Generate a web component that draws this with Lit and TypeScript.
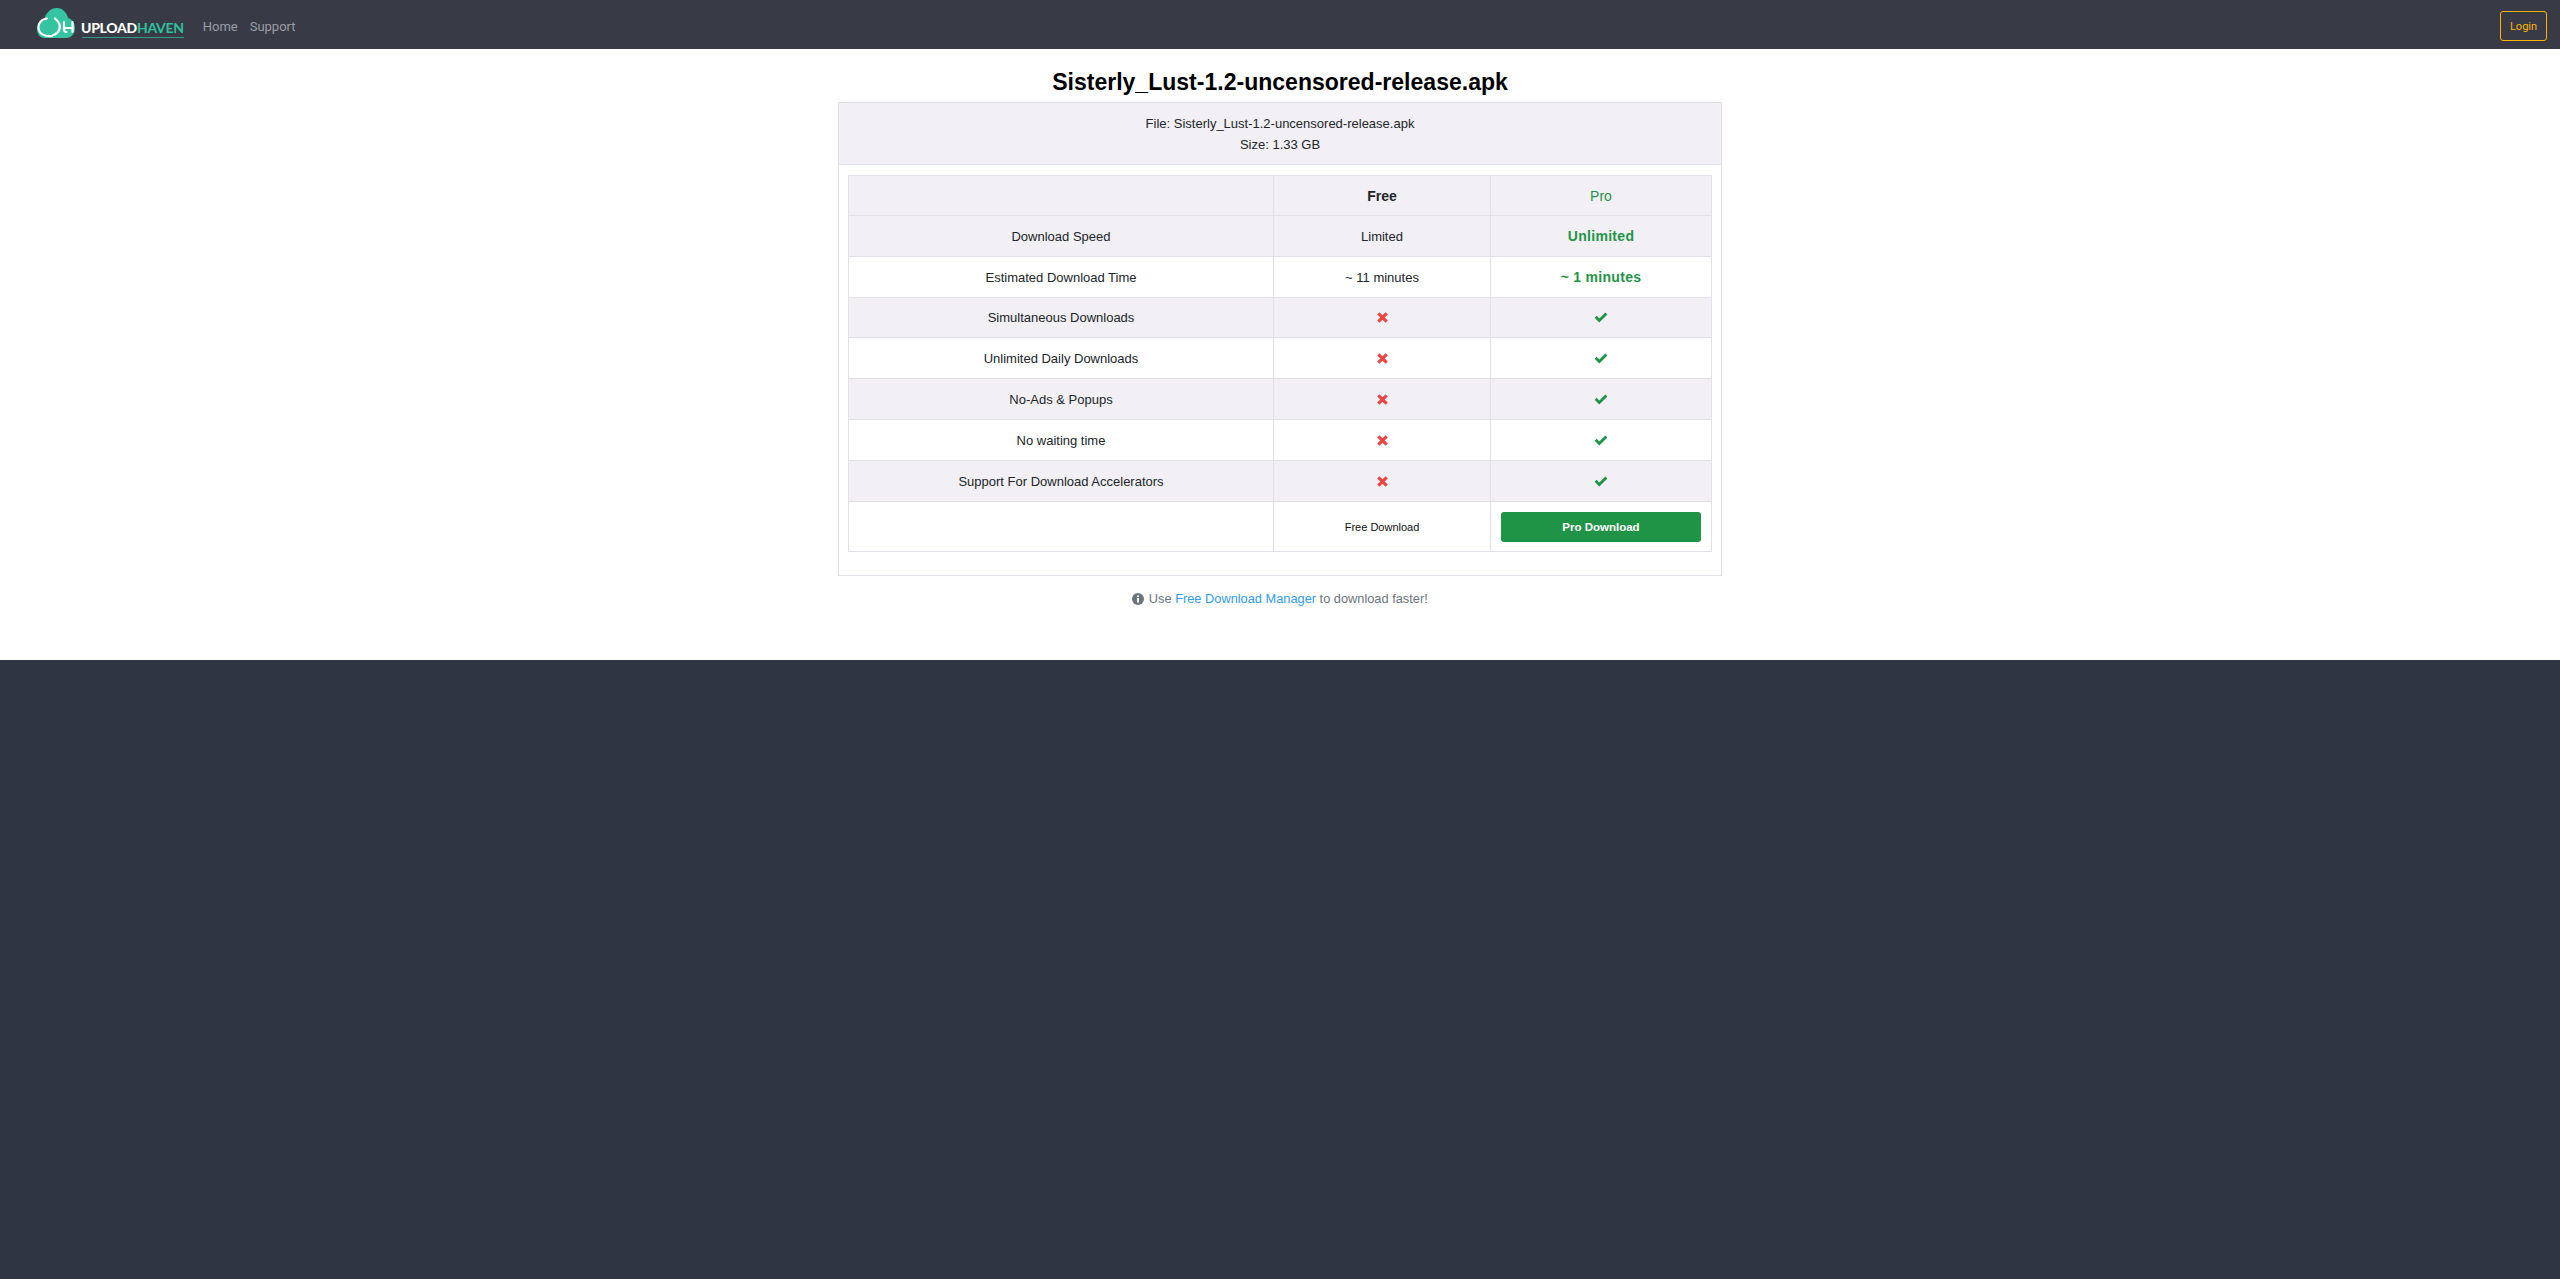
import { LitElement, html, css } from "lit";
import { customElement } from "lit/decorators.js";

const cross = html`<svg class="ic" width="13" height="13" viewBox="0 0 13 13"><path fill="#ef4444" d="M1.2 3.4 3.4 1.2 6.500 4.300 9.600 1.200 11.800 3.400 8.700 6.500 11.800 9.600 9.600 11.800 6.500 8.700 3.400 11.800 1.200 9.600 4.300 6.500Z"/></svg>`;
const check = html`<svg class="ic" width="14" height="13" viewBox="0 0 14 13"><path fill="#1f9447" d="M.6 6.800 2.600 4.800 5.300 7.500 11.400 1.400 13.400 3.400 5.300 11.500Z"/></svg>`;
const rows = ["Simultaneous Downloads", "Unlimited Daily Downloads", "No-Ads & Popups", "No waiting time", "Support For Download Accelerators"];

@customElement("app-root")
export class AppRoot extends LitElement {
  static styles = css`
    :host { display: flex; flex-direction: column; min-height: 1279px; background: #2f3542; font-family: "Liberation Sans", Arial, sans-serif; font-size: 13px; color: #212529; }
    .nav { height: 49px; box-sizing: border-box; background: #383b45; display: flex; align-items: center; padding: 3px 13px 0 37px; }
    .logo { display: flex; align-items: flex-start; align-self: flex-start; margin-top: 5px; }
    .brand { margin-left: 6px; display: flex; flex-direction: column; padding-top: 11px; }
    .word { font-family: Lato, "Open Sans", sans-serif; font-weight: 900; font-size: 14px; letter-spacing: -0.3px; line-height: 17px; color: #fff; }
    .word span { color: #2fc29f; font-weight: 700; }
    .rule { height: 1px; background: #2f9c85; margin-top: 1px; margin-left: 1px; }
    .links { display: flex; gap: 12px; margin-left: 19px; font-family: Roboto, sans-serif; font-size: 13px; color: #9a9da5; }
    .login { margin-left: auto; width: 47px; height: 30px; box-sizing: border-box; border: 1px solid #ffb300; border-radius: 3px; color: #ffb300; font-family: Roboto, sans-serif; font-size: 11px; display: flex; align-items: center; justify-content: center; }
    .main { background: #fff; height: 611px; display: flex; flex-direction: column; align-items: center; }
    h1 { margin: 19px 0 0; height: 34px; font-size: 23.04px; line-height: 29px; font-weight: 700; color: #000; }
    .card { width: 884px; height: 474px; box-sizing: border-box; border: 1px solid #e1e1ea; }
    .head { height: 62px; box-sizing: border-box; padding-top: 10px; background: #f2f0f4; border-bottom: 1px solid #e1e1ea; text-align: center; line-height: 21px; }
    .body { padding: 10px 9px; }
    table { width: 100%; border-collapse: collapse; table-layout: fixed; text-align: center; }
    td { border: 1px solid #e1e1ea; height: 40.8px; padding: 1px 0 0; box-sizing: border-box; vertical-align: middle; }
    tr.first td { height: 40px; font-size: 14px; padding-top: 0; }
    tr.g td { background: #f2f0f4; }
    .c1 { width: 425px; } .c2 { width: 217px; }
    td.b { font-weight: 700; }
    .gr { color: #1f9447; }
    td.big { font-size: 14px; font-weight: 700; color: #1f9447; letter-spacing: .3px; padding-top: 0; }
    .ic { display: inline-block; vertical-align: -2px; }
    .fd { font-size: 11px; color: #111; }
    tr.last td { height: 50px; padding-top: 2px; }
    .pro { margin: 0 10px; height: 30px; border-radius: 3px; background: #1f9447; color: #fff; font-size: 11.5px; font-weight: 700; display: flex; align-items: center; justify-content: center; }
    .note { margin-top: 12px; color: #6c757d; line-height: 21px; font-size: 12.8px; }
    .note a { color: #2f9df4; }
    .info { vertical-align: -2px; margin-right: 1px; }
  `;
  render() {
    return html`
      <div class="nav">
        <div class="logo">
          <svg width="38" height="30" viewBox="0 0 38 30"><path fill="#35c4a2" d="M8 30C3 30 0 26 0 21 0 16.500 3 13.500 7 13 8 6 13 0 19.500 0 26 0 30 5 31 10 35 11 38 15 38 20 38 26 34 30 29 30Z"/><g fill="none" stroke="#fff" stroke-width="2.200" stroke-linecap="round"><path d="M10 10.500C4 11 1 16 1.500 20 2 26 8 29 15 28"/><path d="M18 10.500C22 14 23.500 18 22.500 21 21 25 18.500 26.500 16 27"/><path d="M27 14V21C27 23 28 24 29.500 24"/><path d="M27 20H35.500"/><path d="M35.500 14V24"/></g></svg>
          <div class="brand"><div class="word">UPLOAD<span>HAVEN</span></div><div class="rule"></div></div>
        </div>
        <div class="links"><span>Home</span><span>Support</span></div>
        <div class="login">Login</div>
      </div>
      <div class="main">
        <h1>Sisterly_Lust-1.2-uncensored-release.apk</h1>
        <div class="card">
          <div class="head">File: Sisterly_Lust-1.2-uncensored-release.apk<br>Size: 1.33 GB</div>
          <div class="body">
            <table>
              <tr class="g first"><td class="c1"></td><td class="c2 b">Free</td><td class="gr">Pro</td></tr>
              <tr class="g"><td>Download Speed</td><td>Limited</td><td class="big">Unlimited</td></tr>
              <tr><td>Estimated Download Time</td><td>~ 11 minutes</td><td class="big">~ 1 minutes</td></tr>
              ${rows.map((r, i) => html`<tr class=${i % 2 === 0 ? "g" : ""}><td>${r}</td><td>${cross}</td><td>${check}</td></tr>`)}
              <tr class="last"><td></td><td class="fd">Free Download</td><td><div class="pro">Pro Download</div></td></tr>
            </table>
          </div>
        </div>
        <div class="note"><svg class="info" width="12" height="12" viewBox="0 0 12 12"><circle cx="6" cy="6" r="6" fill="#6c757d"/><rect x="5" y="5" width="2" height="4.500" fill="#fff"/><rect x="5" y="2.500" width="2" height="1.600" fill="#fff"/></svg> Use <a>Free Download Manager</a> to download faster!</div>
      </div>
    `;
  }
}
